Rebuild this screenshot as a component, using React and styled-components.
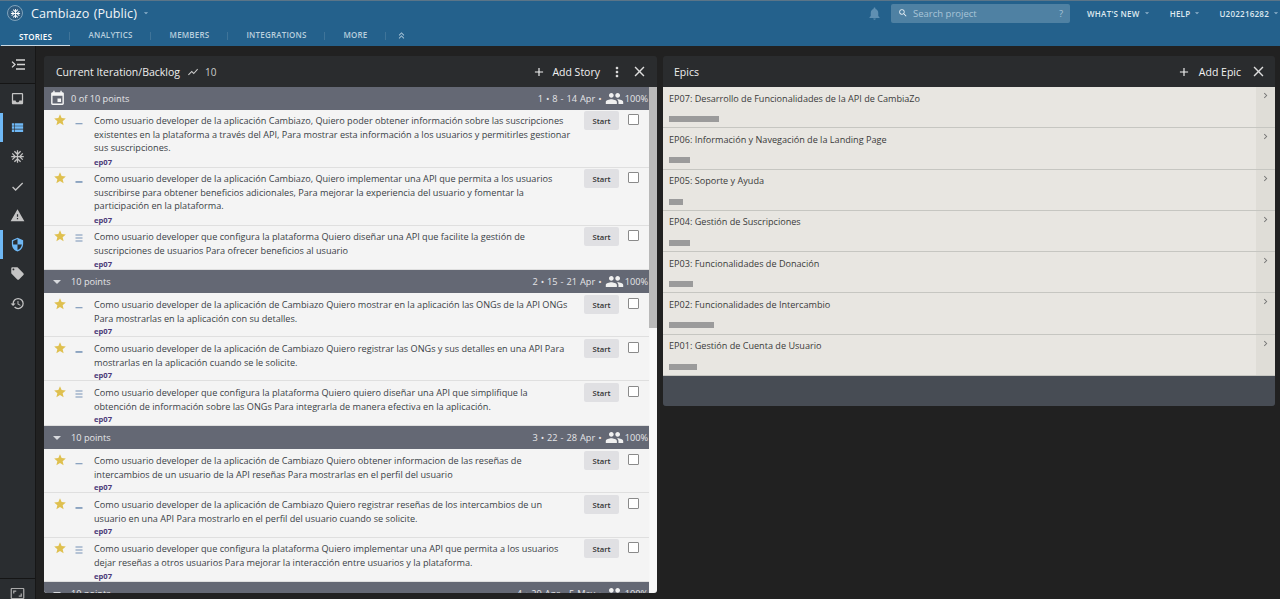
import React from "react";
import styled, { createGlobalStyle } from "styled-components";
import {
  MdInbox, MdViewList, MdAcUnit, MdCheck, MdWarning, MdSecurity, MdLocalOffer, MdRestore, MdAspectRatio,
  MdStar, MdAdd, MdClose, MdMoreVert, MdEvent, MdPeople, MdShowChart,
  MdNotifications, MdSearch, MdKeyboardDoubleArrowUp, MdArrowDropDown, MdChevronRight,
} from "react-icons/md";

const Global = createGlobalStyle`
  html, body { margin: 0; padding: 0; height: 599px; overflow: hidden; background: #212121; }
  * { box-sizing: border-box; }
  body { font-family: "Open Sans", "Liberation Sans", sans-serif; }
`;

const Page = styled.div`display:flex;flex-direction:column;width:1280px;height:599px;overflow:hidden;background:#212121;`;
const TopBar = styled.header`height:46px;flex:none;background:#24618c;border-top:1px solid #5b7588;display:flex;flex-direction:column;`;
const TopRow = styled.div`height:24px;display:flex;align-items:center;padding:0 -1px 0 7px;padding-left:7px;color:#fff;`;
const Logo = styled.div`width:16px;height:16px;border-radius:50%;background:#2f5c80;border:1.5px solid #7fa3bc;display:flex;align-items:center;justify-content:center;color:#fff;font-size:11px;margin-right:8px;`;
const ProjectName = styled.div`font-size:12.6px;letter-spacing:.05px;word-spacing:1px;color:#f1f5f8;`;
const Caret = styled(MdArrowDropDown)`color:#8fb2cb;font-size:10px;margin-left:${p => p.$ml ?? 2}px;`;
const TopSpacer = styled.div`flex:1;`;
const Bell = styled(MdNotifications)`color:#5f8fb2;font-size:15px;margin-right:9px;`;
const Search = styled.div`width:179px;height:19px;background:#4f81a3;border-radius:2px;display:flex;align-items:center;padding:0 7px 0 7px;color:#a9c5d8;font-size:9.5px;margin-right:17px;`;
const SearchIcon = styled(MdSearch)`color:#e8f0f5;font-size:10px;margin-right:5px;`;
const SearchText = styled.span`flex:1;`;
const TopLink = styled.div`font-size:8px;font-weight:600;color:#dfe9f0;letter-spacing:.25px;display:flex;align-items:center;margin-right:${p => p.$mr}px;`;
const Tabs = styled.nav`height:21px;display:flex;align-items:stretch;padding-left:1px;`;
const Tab = styled.div`
  width:${p => p.$w}px;font-size:8px;font-weight:600;letter-spacing:.2px;display:flex;justify-content:center;
  padding-top:${p => (p.$on ? 6 : 4)}px;
  color:${p => (p.$on ? "#fff" : "#b9cfde")};
  border-bottom:${p => (p.$on ? "1px solid #c8d8e3" : "1px solid transparent")};
  position:relative;
  &::after{content:"";position:absolute;right:0;top:7px;height:8px;width:1px;background:#3f7499;}
`;
const Collapse = styled(MdKeyboardDoubleArrowUp)`color:#a9c5d8;font-size:11px;margin:5px 0 0 10px;`;

const Body = styled.div`flex:1;display:flex;min-height:0;`;
const Side = styled.aside`width:36px;flex:none;background:#2a2d30;border-right:1px solid #171717;display:flex;flex-direction:column;`;
const SideTop = styled.div`height:38px;flex:none;border-bottom:1px solid #151515;background:#26282a;display:flex;align-items:center;justify-content:center;color:#d6d6d6;`;
const SideList = styled.div`margin-top:-0.5px;flex:1;`;
const SideItem = styled.div`
  height:29.3px;display:flex;align-items:center;justify-content:center;font-size:15px;
  color:${p => (p.$on ? "#6fb8f5" : "#c4c4c4")};
  box-shadow:${p => (p.$bar ? "inset 3px 0 0 #6fb8f5" : "none")};
`;
const SideBottom = styled.div`height:21px;flex:none;border-top:1px solid #151515;display:flex;justify-content:center;color:#aaa;font-size:15px;padding-top:7px;overflow:hidden;`;
const IndentSvg = styled.svg`width:14px;height:11px;`;

const Main = styled.main`flex:1;display:flex;align-items:flex-start;gap:6px;padding:10px 5px 0 8px;min-width:0;`;
const Panel = styled.section`width:${p => p.$w}px;height:${p => p.$h}px;flex:none;background:#2a2c2e;border-radius:3px;display:flex;flex-direction:column;overflow:hidden;`;
const PanelHead = styled.div`height:31px;flex:none;display:flex;align-items:center;padding:0 11px 0 12px;color:#eee;font-size:10.5px;`;
const Title = styled.div`font-size:10.5px;color:#eee;margin-left:${p => p.$ml || 0}px;`;
const Trend = styled(MdShowChart)`font-size:12px;margin:0 3px 0 7px;color:#ccc;`;
const Count = styled.span`font-size:10px;color:#ccc;margin-left:3px;`;
const HeadIconAdd = styled(MdAdd)`font-size:14px;margin-right:${p => p.$mr ?? 6}px;color:#f2f2f2;`;
const More = styled(MdMoreVert)`font-size:16px;margin-left:9px;color:#ddd;`;
const Close = styled(MdClose)`font-size:17px;margin-left:${p => p.$ml ?? 6}px;color:#ddd;margin-right:${p => p.$mr ?? -2}px;`;
const AddLabel = styled.span`font-size:10.5px;color:#f2f2f2;`;

const Scroller = styled.div`flex:1;min-height:0;display:flex;`;
const StoryList = styled.div`flex:1;min-width:0;background:#f4f4f4;overflow:hidden;`;
const Track = styled.div`width:8px;flex:none;background:#f7f7f7;`;
const Thumb = styled.div`height:241px;background:#b9b9b9;`;

const GroupHead = styled.div`height:23px;background:#646874;color:#e4e5e8;display:flex;align-items:center;padding:0 1px 0 6px;font-size:9.2px;`;
const CalIcon = styled(MdEvent)`font-size:17px;color:#f5f5f5;margin:0 5px 0 -1px;`;
const Tri = styled.span`width:0;height:0;border:4px solid transparent;border-top:4px solid #d7d9dd;border-bottom:0;margin:0 10px 0 3px;`;
const GroupRight = styled.div`margin-left:auto;display:flex;align-items:center;word-spacing:.6px;`;
const People = styled(MdPeople)`font-size:19px;color:#f0f0f0;margin:0 1px 0 3px;`;

const Row = styled.article`height:${p => p.$h}px;display:flex;border-bottom:1px solid #dfdfdf;padding:${p => p.$pt}px 0 0 9px;&:last-child{border-bottom:0;}`;
const Star = styled(MdStar)`font-size:14px;color:#dfc04f;flex:none;margin-top:1px;`;
const Prio = styled.svg`width:8px;height:9px;flex:none;margin:6px 0 0 8px;`;
const Texts = styled.div`width:490px;flex:none;margin-left:11px;padding-top:2px;`;
const Story = styled.p`margin:0;font-size:9.15px;line-height:13.5px;color:#3a3f46;white-space:pre;`;
const Tag = styled.div`font-size:7.6px;line-height:9px;font-weight:700;color:#4b3a78;margin-top:${p => p.$mt}px;`;
const Start = styled.button`width:35px;height:19px;flex:none;border:0;padding:0;margin:-1px 0 0 0;border-radius:2px;background:#e0e0e3;color:#333;font:600 7.7px "Open Sans",sans-serif;`;
const Check = styled.span`width:11px;height:11px;flex:none;background:#fff;border:1px solid #8a8a8a;border-radius:1px;margin:2px 0 0 9px;`;

const EpicList = styled.div`background:#e8e6e1;flex:none;`;
const Epic = styled.div`height:41.3px;display:flex;border-bottom:1px solid #c6c6c1;`;
const EpicBody = styled.div`flex:1;padding:4.6px 0 0 6px;`;
const EpicName = styled.div`font-size:9.1px;line-height:13px;color:#3a3a3a;`;
const EpicBar = styled.div`height:6px;background:#9b9b9b;margin-top:11.4px;`;
const EpicSide = styled.div`width:19px;background:#dfddd7;color:#777;font-size:11px;display:flex;justify-content:center;padding-top:3px;`;
const EpicFoot = styled.div`flex:1;background:#474c54;`;

const Priority = ({ n }) => (
  <Prio viewBox="0 0 8 9">
    {n === 3
      ? [1, 4, 7].map(y => <rect key={y} x="0.5" y={y - 0.6} width="7" height="1.2" fill="#8ba3c0" />)
      : <rect x="0.5" y="5" width="7" height={n === 1 ? 1.3 : 1.9} fill="#8ba3c0" />}
  </Prio>
);

const groups = [
  { head: "0 of 10 points", cal: true, right: "1 • 8 - 14 Apr •", stories: [
    { h: 58, p: 1, t: "Como usuario developer de la aplicación Cambiazo, Quiero poder obtener información sobre las suscripciones\nexistentes en la plataforma a través del API, Para mostrar esta información a los usuarios y permitirles gestionar\nsus suscripciones." },
    { h: 58, p: 2, t: "Como usuario developer de la aplicación Cambiazo, Quiero implementar una API que permita a los usuarios\nsuscribirse para obtener beneficios adicionales, Para mejorar la experiencia del usuario y fomentar la\nparticipación en la plataforma." },
    { h: 44, p: 3, t: "Como usuario developer que configura la plataforma Quiero diseñar una API que facilite la gestión de\nsuscripciones de usuarios Para ofrecer beneficios al usuario" },
  ] },
  { head: "10 points", right: "2 • 15 - 21 Apr •", stories: [
    { h: 44, p: 1, low: true, t: "Como usuario developer de la aplicación de Cambiazo Quiero mostrar en la aplicación las ONGs de la API ONGs\nPara mostrarlas en la aplicación con su detalles." },
    { h: 44, p: 2, low: true, t: "Como usuario developer de la aplicación de Cambiazo Quiero registrar las ONGs y sus detalles en una API Para\nmostrarlas en la aplicación cuando se le solicite." },
    { h: 45, p: 3, low: true, t: "Como usuario developer que configura la plataforma Quiero quiero diseñar una API que simplifique la\nobtención de información sobre las ONGs Para integrarla de manera efectiva en la aplicación." },
  ] },
  { head: "10 points", right: "3 • 22 - 28 Apr •", stories: [
    { h: 44, p: 1, low: true, t: "Como usuario developer de la aplicación de Cambiazo Quiero obtener informacion de las reseñas de\nintercambios de un usuario de la API reseñas Para mostrarlas en el perfil del usuario" },
    { h: 45, p: 2, low: true, t: "Como usuario developer de la aplicación de Cambiazo Quiero registrar reseñas de los intercambios de un\nusuario en una API Para mostrarlo en el perfil del usuario cuando se solicite." },
    { h: 44, p: 3, t: "Como usuario developer que configura la plataforma Quiero implementar una API que permita a los usuarios\ndejar reseñas a otros usuarios Para mejorar la interacción entre usuarios y la plataforma." },
  ] },
  { head: "10 points", right: "4 • 29 Apr - 5 May •", stories: [] },
];

const epics = [
  ["EP07: Desarrollo de Funcionalidades de la API de CambiaZo", 50],
  ["EP06: Información y Navegación de la Landing Page", 21],
  ["EP05: Soporte y Ayuda", 14],
  ["EP04: Gestión de Suscripciones", 21],
  ["EP03: Funcionalidades de Donación", 24],
  ["EP02: Funcionalidades de Intercambio", 45],
  ["EP01: Gestión de Cuenta de Usuario", 28],
];

const sideIcons = [
  [MdInbox], [MdViewList, true, true], [MdAcUnit], [MdCheck], [MdWarning], [MdSecurity, true, true], [MdLocalOffer], [MdRestore],
];

export default function App() {
  return (
    <Page>
      <Global />
      <TopBar>
        <TopRow>
          <Logo><MdAcUnit /></Logo>
          <ProjectName>Cambiazo (Public)</ProjectName>
          <Caret $ml={4} />
          <TopSpacer />
          <Bell />
          <Search><SearchIcon /><SearchText>Search project</SearchText>?</Search>
          <TopLink $mr={18}>WHAT'S NEW<Caret /></TopLink>
          <TopLink $mr={17}>HELP<Caret /></TopLink>
          <TopLink $mr={-1}>U202216282<Caret /></TopLink>
        </TopRow>
        <Tabs>
          <Tab $w={69} $on>STORIES</Tab>
          <Tab $w={81}>ANALYTICS</Tab>
          <Tab $w={77}>MEMBERS</Tab>
          <Tab $w={97}>INTEGRATIONS</Tab>
          <Tab $w={61}>MORE</Tab>
          <Collapse />
        </Tabs>
      </TopBar>
      <Body>
        <Side>
          <SideTop>
            <IndentSvg viewBox="0 0 14 11" fill="none" stroke="currentColor" strokeWidth="1.3">
              <path d="M1 2.6 4 5.5 1 8.4" />
              <path d="M5 1h9M6 5.5h8M5 10h9" />
            </IndentSvg>
          </SideTop>
          <SideList>
            {sideIcons.map(([I, on, bar], i) => (
              <SideItem key={i} $on={on} $bar={bar}><I /></SideItem>
            ))}
          </SideList>
          <SideBottom><MdAspectRatio /></SideBottom>
        </Side>
        <Main>
          <Panel $w={613} $h={537}>
            <PanelHead>
              <Title>Current Iteration/Backlog</Title>
              <Trend /><Count>10</Count>
              <TopSpacer />
              <HeadIconAdd /><AddLabel>Add Story</AddLabel>
              <More /><Close />
            </PanelHead>
            <Scroller>
              <StoryList>
                {groups.map((g, gi) => (
                  <React.Fragment key={gi}>
                    <GroupHead>
                      {g.cal ? <CalIcon /> : <Tri />}
                      {g.head}
                      <GroupRight>{g.right}<People />100%</GroupRight>
                    </GroupHead>
                    {g.stories.map((s, i) => (
                      <Row key={i} $h={s.h} $pt={s.low ? 3 : 2}>
                        <Star />
                        <Priority n={s.p} />
                        <Texts>
                          <Story>{s.t}</Story>
                          <Tag $mt={s.low ? 2 : 3}>ep07</Tag>
                        </Texts>
                        <Start>Start</Start>
                        <Check />
                      </Row>
                    ))}
                  </React.Fragment>
                ))}
              </StoryList>
              <Track><Thumb /></Track>
            </Scroller>
          </Panel>
          <Panel $w={612} $h={350}>
            <PanelHead>
              <Title $ml={-1}>Epics</Title>
              <TopSpacer />
              <HeadIconAdd $mr={8} /><AddLabel>Add Epic</AddLabel>
              <Close $ml={9} $mr={-3} />
            </PanelHead>
            <EpicList>
              {epics.map(([n, w]) => (
                <Epic key={n}>
                  <EpicBody>
                    <EpicName>{n}</EpicName>
                    <EpicBar style={{ width: w }} />
                  </EpicBody>
                  <EpicSide><MdChevronRight /></EpicSide>
                </Epic>
              ))}
            </EpicList>
            <EpicFoot />
          </Panel>
        </Main>
      </Body>
    </Page>
  );
}
